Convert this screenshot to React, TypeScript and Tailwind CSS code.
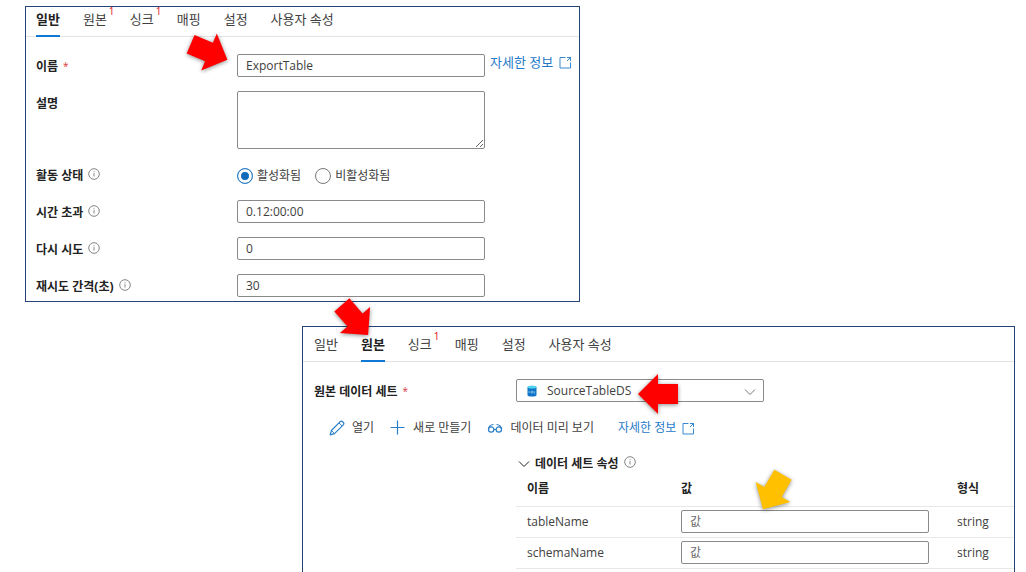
import type { ReactNode } from 'react';
import clsx from 'clsx';

const TABS = ['일반', '원본', '싱크', '매핑', '설정', '사용자 속성'];

const PARAMETERS = [
  { name: 'tableName', type: 'string' },
  { name: 'schemaName', type: 'string' },
];

const inputClass =
  'block h-[23px] w-full rounded-xs border border-[#8a8a8a] bg-white px-2 text-xs text-[#404040] outline-none placeholder:text-[#6b6b6b]';

/* Icons */

function InfoIcon() {
  return (
    <svg viewBox="0 0 12 12" className="mb-1 size-3 shrink-0" fill="none" stroke="#777">
      <circle cx="6" cy="6" r="5.3" strokeWidth="0.9" />
      <path d="M6 5.2v3.3M6 3.3v1" strokeWidth="0.9" />
    </svg>
  );
}

function ExternalIcon() {
  return (
    <svg viewBox="0 0 13 13" className="size-[13px] shrink-0" fill="none" stroke="currentColor">
      <path d="M6.5 1.5H1V12h10.500V6.500" strokeWidth="0.9" />
      <path d="M8 1.500h3.500V5M11.500 1.500L8 5" strokeWidth="0.9" />
    </svg>
  );
}

function PencilIcon() {
  return (
    <svg viewBox="0 0 16 16" className="size-4" fill="none" stroke="#2b7fc9" strokeLinejoin="round">
      <path
        d="M1.2 14.8l1.2-4.3L11.2 1.700a1.700 1.700 0 0 1 2.400 0l.7.7a1.700 1.700 0 0 1 0 2.400L5.500 13.600z"
        strokeWidth="1.2"
      />
      <path d="M2.400 10.500L5.500 13.600M10 2.900L13.100 6" />
    </svg>
  );
}

function PlusIcon() {
  return (
    <svg viewBox="0 0 16 16" className="size-4" fill="none" stroke="#2b7fc9" strokeWidth="1.2">
      <path d="M7.5 .5v14M.5 7.5h14" />
    </svg>
  );
}

function GlassesIcon() {
  return (
    <svg viewBox="0 0 16 16" className="size-4" fill="none" stroke="#2b7fc9" strokeWidth="1.2">
      <circle cx="4.200" cy="9.500" r="2.700" />
      <circle cx="11.800" cy="9.500" r="2.700" />
      <path d="M6.800 9.500h2.400M6.500 4.500C4 4.600 1.400 6.500 1.400 9.200M9.500 4.500c2.500.1 5.100 2 5.100 4.700" />
    </svg>
  );
}

function ChevronDown({ className }: { className?: string }) {
  return (
    <svg viewBox="0 0 12 12" className={clsx('size-3', className)} fill="none" stroke="currentColor">
      <path d="M1 3.5l5 5 5-5" />
    </svg>
  );
}

function DatabaseIcon() {
  return (
    <svg
      viewBox="0 0 10 12"
      className="pointer-events-none absolute top-[6px] left-[11px] h-3 w-[10px]"
    >
      <path d="M.5 2v8c0 .9 2 1.600 4.500 1.600s4.500-.7 4.500-1.600V2z" fill="#0f73c6" />
      <ellipse cx="5" cy="2" rx="4.5" ry="1.6" fill="#50d4f2" />
      <path d="M2 6v2.200M4 6.200h1.600v1.800H4zM7.200 6v2.200h1" fill="none" stroke="#9fd3f5" strokeWidth="0.7" />
    </svg>
  );
}

interface PointerProps {
  angle: number;
  color?: string;
  className: string;
}

// Block arrow used to call out a spot in the form
function Pointer({ angle, color = '#ff0000', className }: PointerProps) {
  return (
    <svg
      viewBox="-24 -24 48 48"
      aria-hidden="true"
      className={clsx(
        'pointer-events-none absolute z-10 size-12 max-w-none overflow-visible drop-shadow-[0_1px_2px_rgba(0,0,0,0.45)]',
        className,
      )}
    >
      <polygon
        points="-20,-10 0,-10 0,-20 20,0 0,20 0,10 -20,10"
        fill={color}
        transform={`rotate(${angle})`}
      />
    </svg>
  );
}

/* Shared parts */

interface TabBarProps {
  active: string;
  errors: string[];
  className?: string;
  pointer?: ReactNode;
}

function TabBar({ active, errors, className, pointer }: TabBarProps) {
  return (
    <div role="tablist" className={clsx('flex gap-[23px] border-b border-[#e3e3e3]', className)}>
      {TABS.map((tab) => {
        const selected = tab === active;
        return (
          <button
            key={tab}
            type="button"
            role="tab"
            aria-selected={selected}
            className={clsx(
              'relative -mb-px h-[30px] border-b-2 pb-1 text-[13px] leading-6 whitespace-nowrap',
              selected ? 'border-[#0f78d4] font-bold text-[#222]' : 'border-transparent text-[#404040]',
            )}
          >
            {tab}
            {errors.includes(tab) && (
              <span className="absolute -top-[2px] left-full ml-[2px] text-[10px] leading-3 text-[#e81123]">
                1
              </span>
            )}
            {selected && pointer}
          </button>
        );
      })}
    </div>
  );
}

interface FieldLabelProps {
  htmlFor?: string;
  id?: string;
  required?: boolean;
  info?: boolean;
  children: ReactNode;
}

function FieldLabel({ htmlFor, id, required, info, children }: FieldLabelProps) {
  const Tag = htmlFor ? 'label' : 'span';
  return (
    <Tag
      {...(htmlFor ? { htmlFor } : {})}
      id={id}
      className="flex h-[26px] items-center gap-[5px] text-xs font-bold whitespace-nowrap text-[#222]"
    >
      {children}
      {required && <span className="text-[10px] font-normal text-[#d9363e]">*</span>}
      {info && <InfoIcon />}
    </Tag>
  );
}

function MoreInfoLink({ className }: { className?: string }) {
  return (
    <a href="#" className={clsx('flex items-center gap-[6px] whitespace-nowrap text-[#1f7ac9]', className)}>
      자세한 정보
      <ExternalIcon />
    </a>
  );
}

function ToolButton({ icon, children }: { icon: ReactNode; children: ReactNode }) {
  return (
    <button type="button" className="flex items-center gap-[7px] whitespace-nowrap">
      {icon}
      {children}
    </button>
  );
}

function RadioOption({ label, checked }: { label: string; checked?: boolean }) {
  return (
    <label className="flex items-center gap-1">
      <input
        type="radio"
        name="activity-state"
        defaultChecked={checked}
        className="size-4 appearance-none rounded-full border border-[#777] bg-white checked:border-[#2b7fc9] checked:bg-[#0f6cbd] checked:shadow-[inset_0_0_0_3px_white]"
      />
      {label}
    </label>
  );
}

/* Panels */

const formRow = 'grid grid-cols-[201px_minmax(0,248px)_auto] items-start';

function GeneralPanel() {
  return (
    <section className="col-span-2 col-start-1 row-start-1 border border-[#264478] bg-white">
      <TabBar active="일반" errors={['원본', '싱크']} className="pl-[10px]" />
      <form className="flex flex-col gap-[14px] pt-[17px] pb-1 pl-[10px]">
        <div className={clsx(formRow, 'h-[23px]')}>
          <FieldLabel htmlFor="name" required>
            이름
          </FieldLabel>
          <div className="relative">
            <input id="name" className={inputClass} defaultValue="ExportTable" />
            <Pointer angle={23} className="-top-[26px] -left-[52px]" />
          </div>
          <MoreInfoLink className="ml-[5px] text-[13px] leading-4" />
        </div>
        <div className={formRow}>
          <FieldLabel htmlFor="description">설명</FieldLabel>
          <textarea
            id="description"
            className="block h-[58px] w-full resize rounded-xs border border-[#8a8a8a] px-2 text-xs outline-none"
          />
        </div>
        <div className={clsx(formRow, 'h-[23px]')}>
          <FieldLabel id="state-label" info>
            활동 상태
          </FieldLabel>
          <div role="radiogroup" aria-labelledby="state-label" className="flex h-[26px] items-center gap-[14px]">
            <RadioOption label="활성화됨" checked />
            <RadioOption label="비활성화됨" />
          </div>
        </div>
        <div className={clsx(formRow, 'h-[23px]')}>
          <FieldLabel htmlFor="timeout" info>
            시간 초과
          </FieldLabel>
          <input id="timeout" className={inputClass} defaultValue="0.12:00:00" />
        </div>
        <div className={clsx(formRow, 'h-[23px]')}>
          <FieldLabel htmlFor="retry" info>
            다시 시도
          </FieldLabel>
          <input id="retry" className={inputClass} defaultValue="0" />
        </div>
        <div className={clsx(formRow, 'h-[23px]')}>
          <FieldLabel htmlFor="interval" info>
            재시도 간격(초)
          </FieldLabel>
          <input id="interval" className={inputClass} defaultValue="30" />
        </div>
      </form>
    </section>
  );
}

function SourcePanel() {
  return (
    <section className="col-span-2 col-start-2 row-start-2 border border-b-0 border-[#264478] bg-white">
      <TabBar
        active="원본"
        errors={['싱크']}
        className="pt-[5px] pl-[11px]"
        pointer={<Pointer angle={49} className="-top-9 -left-[30px]" />}
      />

      <div className="grid grid-cols-[202px_minmax(0,248px)] pt-[17px] pl-[11px]">
        <FieldLabel htmlFor="dataset" required>
          원본 데이터 세트
        </FieldLabel>
        <div className="relative">
          <select
            id="dataset"
            className="block h-[23px] w-full appearance-none rounded-xs border border-[#8a8a8a] bg-white pl-[30px] text-xs text-[#404040] outline-none"
          >
            <option>SourceTableDS</option>
          </select>
          <DatabaseIcon />
          <ChevronDown className="pointer-events-none absolute top-[7px] right-2 text-[#777]" />
          <Pointer angle={180} className="-top-[9px] left-[118px]" />
        </div>
      </div>

      <div className="mt-[11px] flex h-6 items-center pl-[26px]">
        <div className="flex items-center gap-4">
          <ToolButton icon={<PencilIcon />}>열기</ToolButton>
          <ToolButton icon={<PlusIcon />}>새로 만들기</ToolButton>
          <ToolButton icon={<GlassesIcon />}>데이터 미리 보기</ToolButton>
        </div>
        <MoreInfoLink className="ml-6" />
      </div>

      <div className="mt-3 ml-[213px]">
        <button type="button" className="flex h-6 items-center gap-[5px] pl-[2px] font-bold text-[#222]">
          <ChevronDown />
          데이터 세트 속성
          <InfoIcon />
        </button>
        <table className="w-full table-fixed border-collapse text-left">
          <colgroup>
            <col className="w-[165px]" />
            <col className="w-[276px]" />
            <col />
          </colgroup>
          <thead>
            <tr className="h-[30px] border-b border-[#e8e8e8] align-top text-[#222]">
              <th className="pt-[5px] pl-[11px]">이름</th>
              <th>
                <div className="relative pt-[5px]">
                  값
                  <Pointer angle={120} color="#ffc000" className="-top-2 left-[68px]" />
                </div>
              </th>
              <th className="pt-[5px]">형식</th>
            </tr>
          </thead>
          <tbody>
            {PARAMETERS.map((param) => (
              <tr key={param.name} className="h-[31px] border-b border-[#e8e8e8]">
                <td className="pl-[11px]">{param.name}</td>
                <td className="pr-7">
                  <input aria-label={param.name} placeholder="값" className={inputClass} />
                </td>
                <td>{param.type}</td>
              </tr>
            ))}
          </tbody>
        </table>
      </div>
    </section>
  );
}

export default function App() {
  return (
    <main className="grid min-h-screen grid-cols-[277fr_278fr_435fr] grid-rows-[auto_1fr] gap-y-6 bg-white pt-[6px] pr-[11px] pl-[25px] font-['Open_Sans','Noto_Sans_CJK_KR',sans-serif] text-xs text-[#404040]">
      <GeneralPanel />
      <SourcePanel />
    </main>
  );
}
